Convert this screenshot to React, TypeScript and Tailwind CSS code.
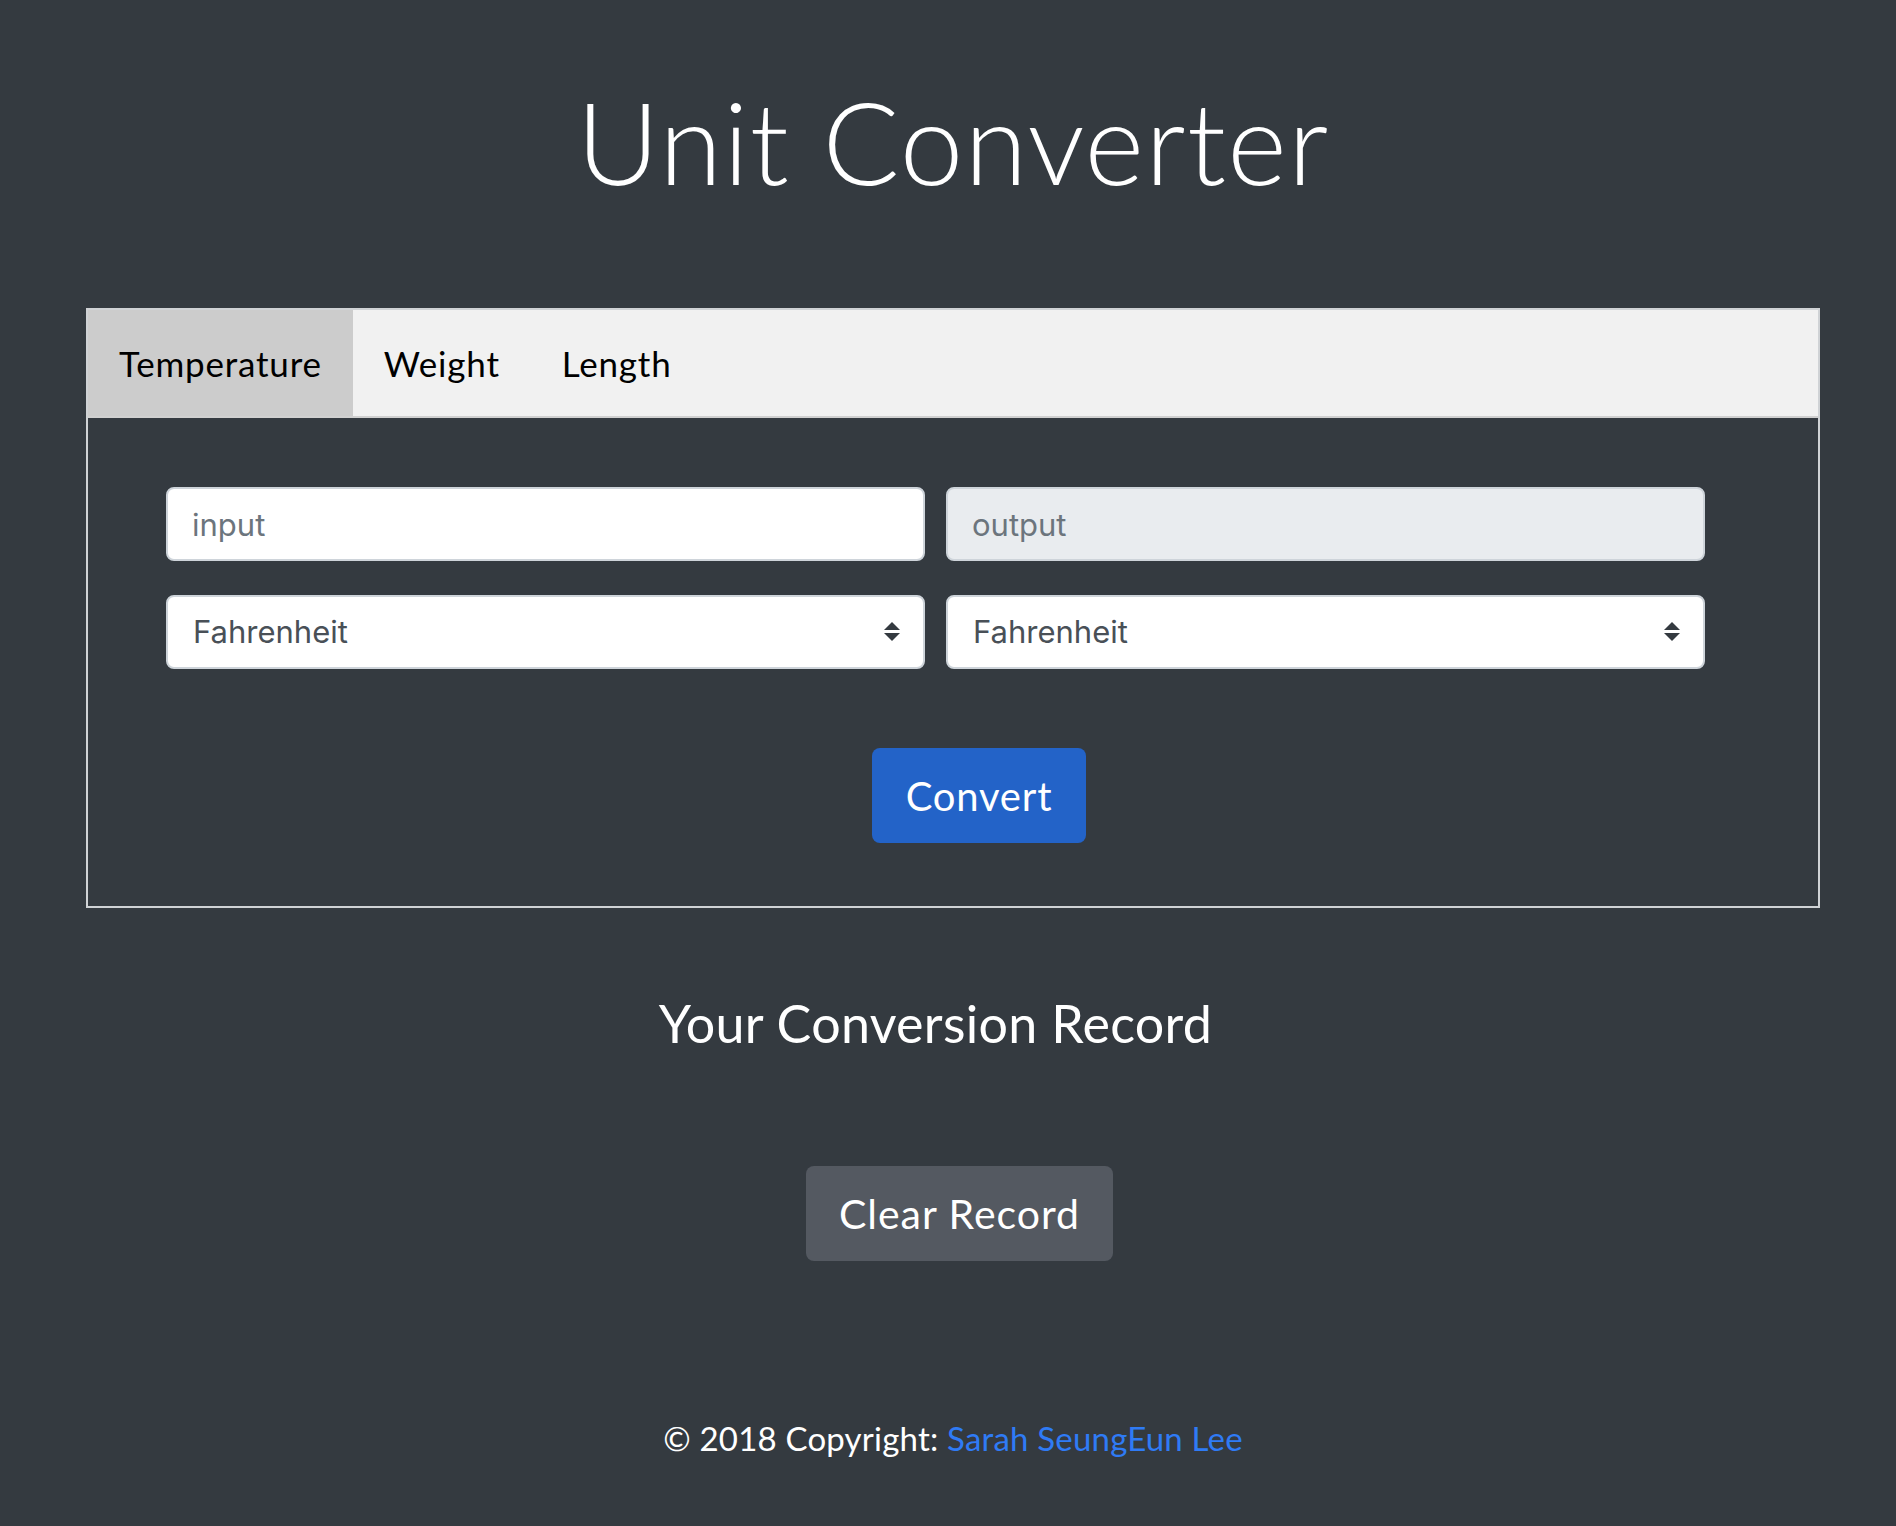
import React from "react";

const heading = { fontFamily: "Lato, 'Open Sans', sans-serif" };
const system = { fontFamily: "Inter, 'Noto Sans', sans-serif" };

function SelectArrows() {
  return (
    <svg
      className="pointer-events-none absolute right-[25px] top-1/2 -translate-y-1/2"
      width="16"
      height="20"
      viewBox="0 0 16 20"
    >
      <path d="M8 0 L16 8 L0 8 Z" fill="#343a40" />
      <path d="M0 11 L16 11 L8 19 Z" fill="#343a40" />
    </svg>
  );
}

function UnitSelect() {
  return (
    <div className="relative">
      <select
        style={system}
        defaultValue="Fahrenheit"
        className="h-[74px] w-full appearance-none rounded-[8px] border-2 border-[#ced4da] bg-white pl-[25px] text-[31px] text-[#495057] outline-none"
      >
        <option>Fahrenheit</option>
        <option>Celsius</option>
        <option>Kelvin</option>
      </select>
      <SelectArrows />
    </div>
  );
}

export default function App() {
  const tabs = ["Temperature", "Weight", "Length"];

  return (
    <div className="min-h-[1526px] w-full bg-[#343a40] pb-[40px]" style={heading}>
      <h1 className="pl-[10px] pt-[84px] text-center text-[114px] font-light leading-none tracking-[1.3px] text-white">
        Unit Converter
      </h1>

      <section className="ml-[86px] mt-[110px] w-[1734px] border-2 border-[#cfd2d5]">
        <div className="flex border-b-2 border-[#d0d0d0] bg-[#f1f1f1]">
          {tabs.map((t, i) => (
            <button
              key={t}
              className={`h-[106px] px-[31px] text-[35px] tracking-[0.8px] text-black ${i === 0 ? "bg-[#cccccc]" : ""}`}
            >
              {t}
            </button>
          ))}
        </div>

        <div className="pb-[63px] pl-[78px] pr-[113px] pt-[69px]">
          <div className="grid grid-cols-2 gap-x-[21px] gap-y-[34px]">
            <input
              style={system}
              placeholder="input"
              className="h-[74px] rounded-[8px] border-2 border-[#ced4da] bg-white px-[24px] text-[31px] text-[#495057] outline-none placeholder:text-[#6c757d]"
            />
            <input
              style={system}
              placeholder="output"
              readOnly
              className="h-[74px] rounded-[8px] border-2 border-[#ced4da] bg-[#e9ecef] px-[24px] text-[31px] text-[#495057] outline-none placeholder:text-[#6c757d]"
            />
            <UnitSelect />
            <UnitSelect />
          </div>

          <button className="ml-[706px] mt-[79px] h-[95px] w-[214px] rounded-[8px] bg-[#2363c8] text-[40px] tracking-[0.8px] text-white">
            Convert
          </button>
        </div>
      </section>

      <h3 className="ml-[166px] mt-[89px] w-[1539px] text-center text-[52px] leading-none tracking-[0.3px] text-white">
        Your Conversion Record
      </h3>

      <div className="mt-[117px] flex justify-center pl-[23px]">
        <button className="h-[95px] w-[307px] rounded-[8px] bg-[#545961] text-[41px] tracking-[1px] text-white">
          Clear Record
        </button>
      </div>

      <footer className="mt-[161px] pl-[10px] text-center text-[33px] leading-none tracking-[0.2px] text-white">
        © 2018 Copyright: <a className="text-[#2f7bf5]">Sarah SeungEun Lee</a>
      </footer>
    </div>
  );
}
